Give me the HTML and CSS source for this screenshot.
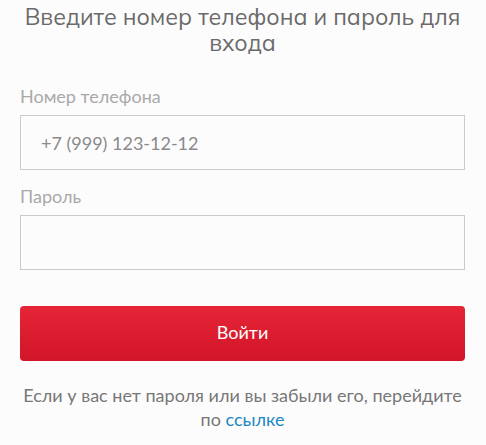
FILE: index.html
```html
<!DOCTYPE html>
<html lang="ru">
<head>
<meta charset="utf-8">
<link rel="stylesheet" href="styles.css">
</head>
<body>
<form class="login">
  <h1 class="title">Введите номер телефона и пароль для входа</h1>
  <label class="field">
    <span class="label">Номер телефона</span>
    <span class="input">+7 (999) 123-12-12</span>
  </label>
  <label class="field">
    <span class="label">Пароль</span>
    <span class="input"></span>
  </label>
  <div class="button">Войти</div>
  <p class="note">Если у вас нет пароля или вы забыли его, перейдите по <a class="link" href="#">ссылке</a></p>
</form>
</body>
</html>
```
FILE: styles.css
```css
html, body {
  margin: 0;
  padding: 0;
  background: #fdfcfd;
}
body {
  font-family: Lato, "Open Sans", sans-serif;
}
.login {
  display: flex;
  flex-direction: column;
  padding: 4px 21px 0 20px;
}
.title {
  margin: 0;
  font-family: Mulish, Muli, "Open Sans", Lato, sans-serif;
  font-weight: 400;
  font-size: 23px;
  line-height: 26px;
  color: #6a6a6a;
  text-align: center;
}
.field {
  display: flex;
  flex-direction: column;
}
.field:first-of-type {
  margin-top: 30px;
}
.label {
  font-size: 18px;
  line-height: 20px;
  color: #a9a9a9;
  margin-bottom: 9px;
}
.field + .field {
  margin-top: 16px;
}
.input {
  box-sizing: border-box;
  height: 55px;
  border: 1px solid #cbcbcb;
  background: #fdfcfd;
  padding: 0 20px;
  display: flex;
  align-items: center;
  font-size: 18px;
  color: #8a8a8a;
}
.button {
  margin-top: 36px;
  height: 55px;
  border-radius: 4px;
  background: linear-gradient(#e62537, #d21529);
  color: #fff;
  font-size: 18px;
  padding-bottom: 3px;
  box-sizing: border-box;
  display: flex;
  align-items: center;
  justify-content: center;
}
.note {
  margin: 22px 0 0;
  text-align: center;
  font-size: 18px;
  line-height: 24px;
  color: #777;
}
.link {
  color: #1b87c4;
  text-decoration: none;
}
```
